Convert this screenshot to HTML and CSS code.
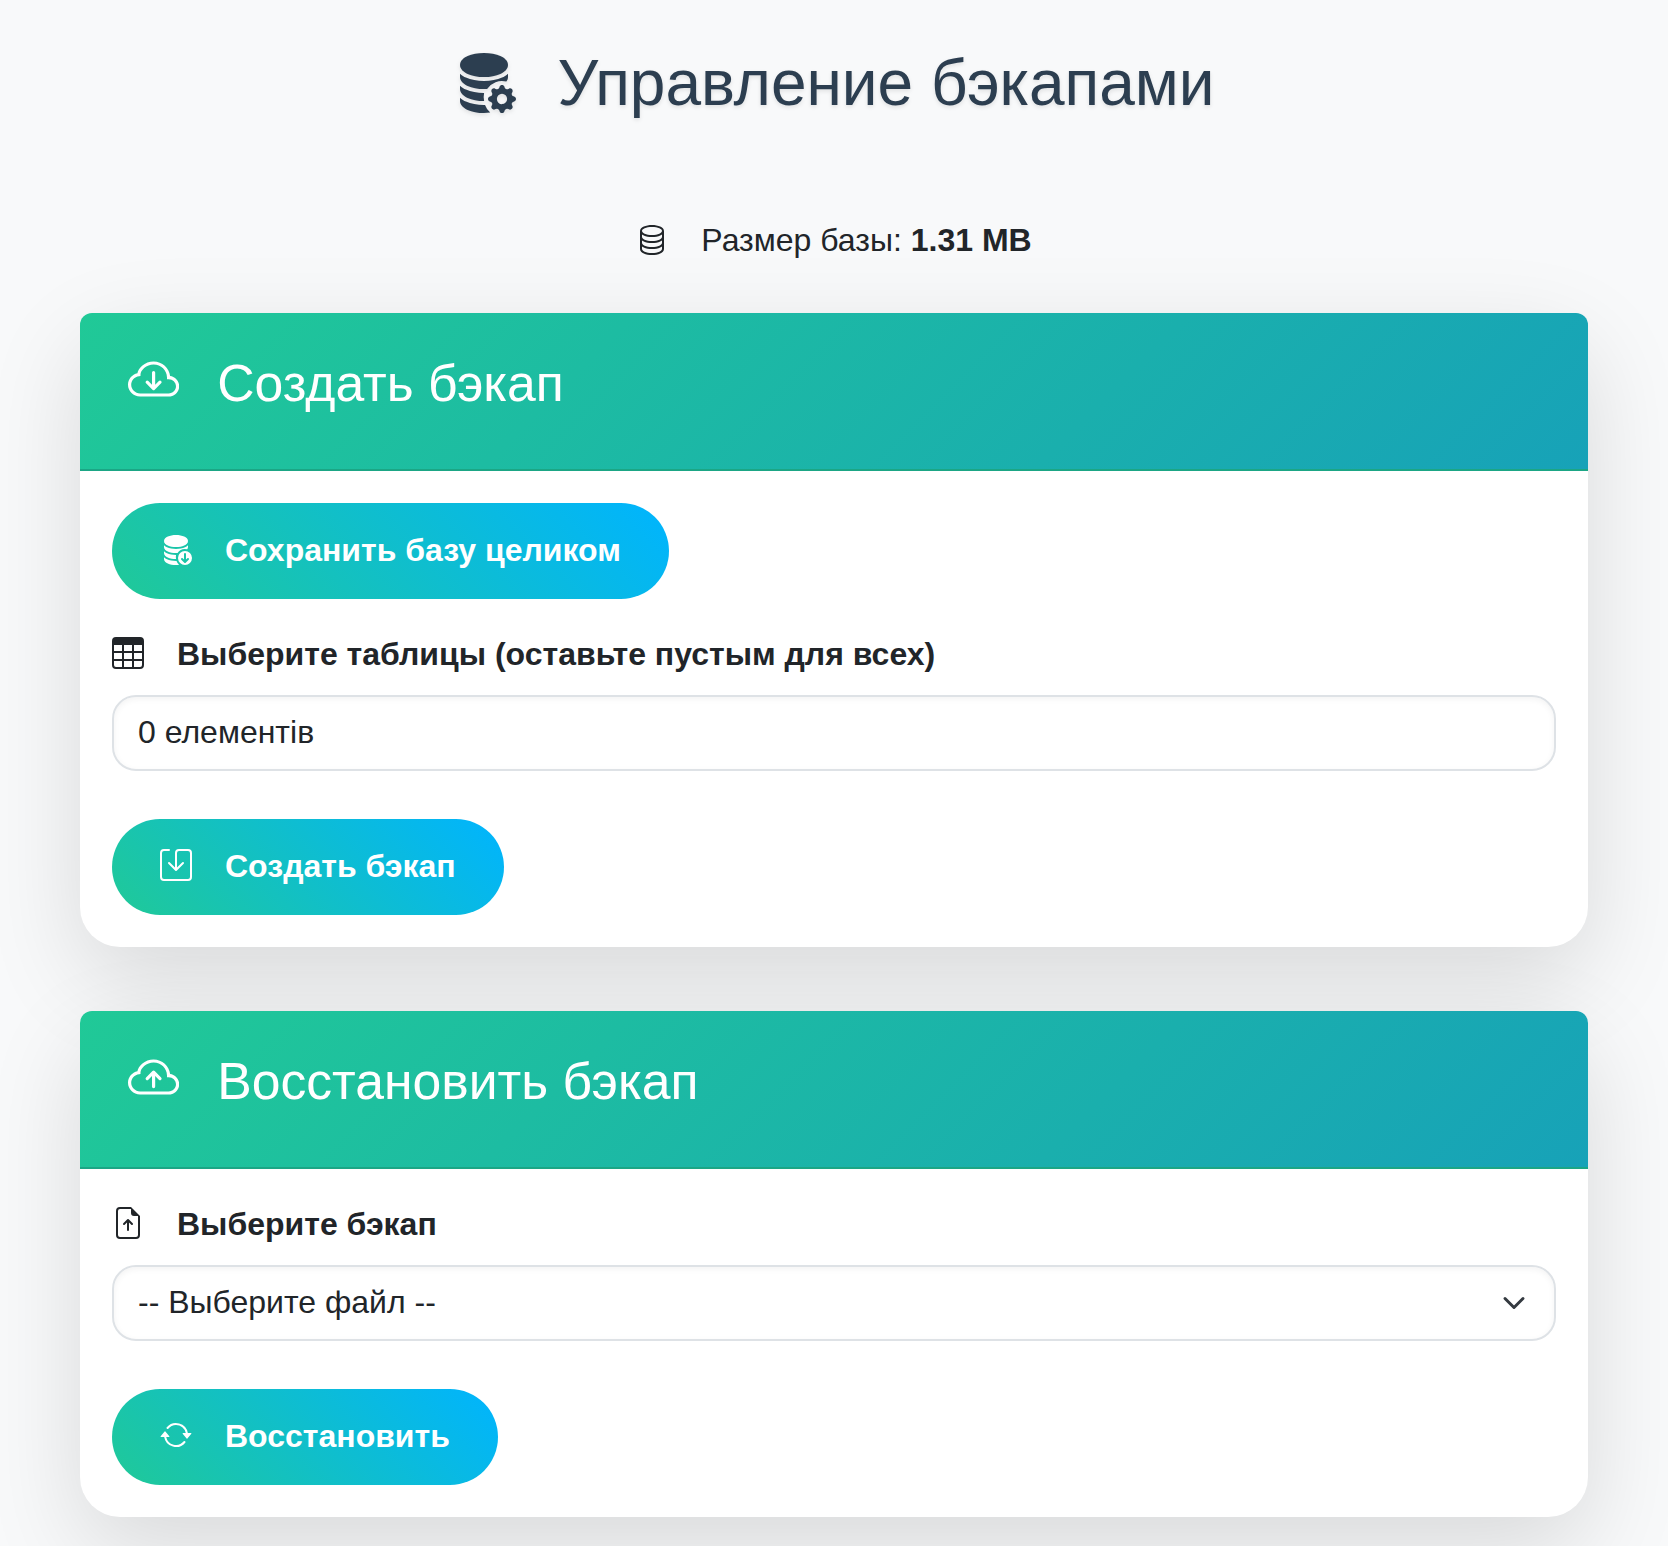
FILE: index.html
```html
<!DOCTYPE html>
<html lang="ru">
<head>
    <meta charset="UTF-8">
    <title>Управление бэкапами</title>
    <link rel="stylesheet" href="styles.css">
</head>

<body>
    <div class="container">
        <!--заголовок-->
        <h1 class="mtit">
            <svg class="ico ico-title" viewBox="0 0 16 16" fill="currentColor">
                <path d="M8 1c-1.573 0-3.022.289-4.096.777C2.875 2.245 2 2.993 2 4s.875 1.755 1.904 2.223C4.978 6.711 6.427 7 8 7s3.022-.289 4.096-.777C13.125 5.755 14 5.007 14 4s-.875-1.755-1.904-2.223C11.022 1.289 9.573 1 8 1Z"/>
                <path d="M2 7v-.839c.457.432 1.004.751 1.49.972C4.722 7.693 6.318 8 8 8s3.278-.307 4.51-.867c.486-.22 1.033-.54 1.49-.972V7c0 .424-.155.802-.411 1.133a4.51 4.51 0 0 0-4.815 1.843A12.31 12.31 0 0 1 8 10c-1.573 0-3.022-.289-4.096-.777C2.875 8.755 2 8.007 2 7Z"/>
                <path d="M8.027 11H8c-1.682 0-3.278-.307-4.51-.867-.486-.22-1.033-.54-1.49-.972V10c0 1.007.875 1.755 1.904 2.223C4.978 12.711 6.427 13 8 13h.027a4.552 4.552 0 0 1 0-2Z"/>
                <path d="M8 14c-1.682 0-3.278-.307-4.51-.867-.486-.22-1.033-.54-1.49-.972V13c0 1.007.875 1.755 1.904 2.223C4.978 15.711 6.427 16 8 16c.536 0 1.058-.034 1.555-.097a4.507 4.507 0 0 1-1.3-1.905L8 14Z"/>
                <path transform="translate(9 9) scale(.4375)" d="M9.405 1.05c-.413-1.4-2.397-1.4-2.81 0l-.1.34a1.464 1.464 0 0 1-2.105.872l-.31-.17c-1.283-.698-2.686.705-1.987 1.987l.169.311c.446.82.023 1.841-.872 2.105l-.34.1c-1.4.413-1.4 2.397 0 2.81l.34.1a1.464 1.464 0 0 1 .872 2.105l-.17.31c-.698 1.283.705 2.686 1.987 1.987l.311-.169a1.464 1.464 0 0 1 2.105.872l.1.34c.413 1.4 2.397 1.4 2.81 0l.1-.34a1.464 1.464 0 0 1 2.105-.872l.31.17c1.283.698 2.686-.705 1.987-1.987l-.169-.311a1.464 1.464 0 0 1 .872-2.105l.34-.1c1.4-.413 1.4-2.397 0-2.81l-.34-.1a1.464 1.464 0 0 1-.872-2.105l.17-.31c.698-1.283-.705-2.686-1.987-1.987l-.311.169a1.464 1.464 0 0 1-2.105-.872l-.1-.34zM8 10.93a2.929 2.929 0 1 1 0-5.86 2.929 2.929 0 0 1 0 5.858z"/>
            </svg>
            <span>Управление бэкапами</span>
        </h1>

        <!--размер базы-->
        <p class="dbsize">
            <svg class="ico" viewBox="0 0 16 16" fill="currentColor">
                <path d="M4.318 2.687C5.234 2.271 6.536 2 8 2s2.766.27 3.682.687C12.644 3.125 13 3.627 13 4c0 .374-.356.875-1.318 1.313C10.766 5.729 9.464 6 8 6s-2.766-.27-3.682-.687C3.356 4.875 3 4.373 3 4c0-.374.356-.875 1.318-1.313ZM13 5.698V7c0 .374-.356.875-1.318 1.313C10.766 8.729 9.464 9 8 9s-2.766-.27-3.682-.687C3.356 7.875 3 7.373 3 7V5.698c.271.202.58.378.904.525C4.978 6.711 6.427 7 8 7s3.022-.289 4.096-.777A4.92 4.92 0 0 0 13 5.698ZM14 4c0-1.007-.875-1.755-1.904-2.223C11.022 1.289 9.573 1 8 1s-3.022.289-4.096.777C2.875 2.245 2 2.993 2 4v9c0 1.007.875 1.755 1.904 2.223C4.978 15.71 6.427 16 8 16s3.022-.289 4.096-.777C13.125 14.755 14 14.007 14 13V4Zm-1 4.698V10c0 .374-.356.875-1.318 1.313C10.766 11.729 9.464 12 8 12s-2.766-.27-3.682-.687C3.356 10.875 3 10.373 3 10V8.698c.271.202.58.378.904.525C4.978 9.71 6.427 10 8 10s3.022-.289 4.096-.777A4.92 4.92 0 0 0 13 8.698Zm0 3V13c0 .374-.356.875-1.318 1.313C10.766 14.729 9.464 15 8 15s-2.766-.27-3.682-.687C3.356 13.875 3 13.373 3 13v-1.302c.271.202.58.378.904.525C4.978 12.71 6.427 13 8 13s3.022-.289 4.096-.777c.324-.147.633-.323.904-.525Z"/>
            </svg>
            <span>Размер базы: <strong>1.31 MB</strong></span>
        </p>

        <!--создать бэкап-->
        <section class="card">
            <header class="card-head">
                <svg class="ico ico-head" viewBox="0 0 16 16" fill="currentColor">
                    <path d="M7.646 10.854a.5.5 0 0 0 .708 0l2-2a.5.5 0 0 0-.708-.708L8.5 9.293V5.5a.5.5 0 0 0-1 0v3.793L6.354 8.146a.5.5 0 1 0-.708.708l2 2z"/>
                    <path d="M4.406 3.342A5.53 5.53 0 0 1 8 2c2.69 0 4.923 2 5.166 4.579C14.758 6.804 16 8.137 16 9.773 16 11.569 14.502 13 12.687 13H3.781C1.708 13 0 11.366 0 9.318c0-1.763 1.266-3.223 2.942-3.593.143-.863.698-1.723 1.464-2.383zm.653.757c-.757.653-1.153 1.44-1.153 2.056v.448l-.445.049C2.064 6.805 1 7.952 1 9.318 1 10.785 2.23 12 3.781 12h8.906C13.98 12 15 10.988 15 9.773c0-1.216-1.02-2.228-2.313-2.228h-.5v-.5C12.188 4.825 10.328 3 8 3a4.53 4.53 0 0 0-2.941 1.1z"/>
                </svg>
                <h2>Создать бэкап</h2>
            </header>
            <div class="card-body">
                <a class="btn btn-first" href="#">
                    <svg class="ico" viewBox="0 0 16 16" fill="currentColor">
                        <path d="M12.5 9a3.5 3.5 0 1 1 0 7 3.5 3.5 0 0 1 0-7Zm.354 5.854 1.5-1.5a.5.5 0 0 0-.708-.708l-.646.647V10.5a.5.5 0 0 0-1 0v2.793l-.646-.647a.5.5 0 0 0-.708.708l1.5 1.5a.5.5 0 0 0 .708 0Z"/>
                        <path d="M8 1c-1.573 0-3.022.289-4.096.777C2.875 2.245 2 2.993 2 4s.875 1.755 1.904 2.223C4.978 6.711 6.427 7 8 7s3.022-.289 4.096-.777C13.125 5.755 14 5.007 14 4s-.875-1.755-1.904-2.223C11.022 1.289 9.573 1 8 1Z"/>
                        <path d="M2 7v-.839c.457.432 1.004.751 1.49.972C4.722 7.693 6.318 8 8 8s3.278-.307 4.51-.867c.486-.22 1.033-.54 1.49-.972V7c0 .424-.155.802-.411 1.133a4.51 4.51 0 0 0-4.815 1.843A12.31 12.31 0 0 1 8 10c-1.573 0-3.022-.289-4.096-.777C2.875 8.755 2 8.007 2 7Z"/>
                        <path d="M8.027 11H8c-1.682 0-3.278-.307-4.51-.867-.486-.22-1.033-.54-1.49-.972V10c0 1.007.875 1.755 1.904 2.223C4.978 12.711 6.427 13 8 13h.027a4.552 4.552 0 0 1 0-2Z"/>
                        <path d="M8 14c-1.682 0-3.278-.307-4.51-.867-.486-.22-1.033-.54-1.49-.972V13c0 1.007.875 1.755 1.904 2.223C4.978 15.711 6.427 16 8 16c.536 0 1.058-.034 1.555-.097a4.507 4.507 0 0 1-1.3-1.905L8 14Z"/>
                    </svg>
                    <span>Сохранить базу целиком</span>
                </a>
                <label class="lbl">
                    <svg class="ico" viewBox="0 0 16 16" fill="currentColor">
                        <path d="M0 2a2 2 0 0 1 2-2h12a2 2 0 0 1 2 2v12a2 2 0 0 1-2 2H2a2 2 0 0 1-2-2V2zm15 2h-4v3h4V4zm0 4h-4v3h4V8zm0 4h-4v3h3a1 1 0 0 0 1-1v-2zm-5 3v-3H6v3h4zm-5 0v-3H1v2a1 1 0 0 0 1 1h3zm-4-4h4V8H1v3zm0-4h4V4H1v3zm5-3v3h4V4H6zm4 4H6v3h4V8z"/>
                    </svg>
                    <span>Выберите таблицы (оставьте пустым для всех)</span>
                </label>
                <div class="field">0 елементів</div>
                <a class="btn" href="#">
                    <svg class="ico" viewBox="0 0 16 16" fill="currentColor">
                        <path d="M2 1a1 1 0 0 0-1 1v12a1 1 0 0 0 1 1h12a1 1 0 0 0 1-1V2a1 1 0 0 0-1-1H9.5a1 1 0 0 0-1 1v7.293l2.646-2.647a.5.5 0 0 1 .708.708l-3.5 3.5a.5.5 0 0 1-.708 0l-3.5-3.5a.5.5 0 1 1 .708-.708L7.5 9.293V2a2 2 0 0 1 2-2H14a2 2 0 0 1 2 2v12a2 2 0 0 1-2 2H2a2 2 0 0 1-2-2V2a2 2 0 0 1 2-2h2.5a.5.5 0 0 1 0 1H2z"/>
                    </svg>
                    <span>Создать бэкап</span>
                </a>
            </div>
        </section>

        <!--восстановить бэкап-->
        <section class="card">
            <header class="card-head">
                <svg class="ico ico-head" viewBox="0 0 16 16" fill="currentColor">
                    <path d="M8.354 5.646a.5.5 0 0 0-.708 0l-2 2a.5.5 0 1 0 .708.708L7.5 7.207V10.5a.5.5 0 0 0 1 0V7.207l1.146 1.147a.5.5 0 0 0 .708-.708l-2-2z"/>
                    <path d="M4.406 3.342A5.53 5.53 0 0 1 8 2c2.69 0 4.923 2 5.166 4.579C14.758 6.804 16 8.137 16 9.773 16 11.569 14.502 13 12.687 13H3.781C1.708 13 0 11.366 0 9.318c0-1.763 1.266-3.223 2.942-3.593.143-.863.698-1.723 1.464-2.383zm.653.757c-.757.653-1.153 1.44-1.153 2.056v.448l-.445.049C2.064 6.805 1 7.952 1 9.318 1 10.785 2.23 12 3.781 12h8.906C13.98 12 15 10.988 15 9.773c0-1.216-1.02-2.228-2.313-2.228h-.5v-.5C12.188 4.825 10.328 3 8 3a4.53 4.53 0 0 0-2.941 1.1z"/>
                </svg>
                <h2>Восстановить бэкап</h2>
            </header>
            <div class="card-body">
                <label class="lbl">
                    <svg class="ico" viewBox="0 0 16 16" fill="currentColor">
                        <path d="M8.5 11.5a.5.5 0 0 1-1 0V7.707L6.354 8.854a.5.5 0 1 1-.708-.708l2-2a.5.5 0 0 1 .708 0l2 2a.5.5 0 0 1-.708.708L8.5 7.707V11.5z"/>
                        <path d="M14 14V4.5L9.5 0H4a2 2 0 0 0-2 2v12a2 2 0 0 0 2 2h8a2 2 0 0 0 2-2zM9.5 3A1.5 1.5 0 0 0 11 4.5h2V14a1 1 0 0 1-1 1H4a1 1 0 0 1-1-1V2a1 1 0 0 1 1-1h5.5v2z"/>
                    </svg>
                    <span>Выберите бэкап</span>
                </label>
                <select class="field field-sel">
                    <option>-- Выберите файл --</option>
                </select>
                <a class="btn" href="#">
                    <svg class="ico" viewBox="0 0 16 16" fill="currentColor">
                        <path d="M11.534 7h3.932a.25.25 0 0 1 .192.41l-1.966 2.36a.25.25 0 0 1-.384 0l-1.966-2.36a.25.25 0 0 1 .192-.41zm-11 2h3.932a.25.25 0 0 0 .192-.41L2.692 6.23a.25.25 0 0 0-.384 0L.342 8.59A.25.25 0 0 0 .534 9z"/>
                        <path d="M8 3c-1.552 0-2.94.707-3.857 1.818a.5.5 0 1 1-.771-.636A6.002 6.002 0 0 1 13.917 7H12.9A5.002 5.002 0 0 0 8 3zM3.1 9a5.002 5.002 0 0 0 8.757 2.182.5.5 0 1 1 .771.636A6.002 6.002 0 0 1 2.083 9H3.1z"/>
                    </svg>
                    <span>Восстановить</span>
                </a>
            </div>
        </section>
    </div>
</body></html>
```

FILE: styles.css
```css
html,
body,
h1,
h2,
p {
    margin: 0;
    padding: 0;
}

body {
    background-color: #f8f9fa;
    color: #212529;
    font-family: "Liberation Sans", Arial, sans-serif;
    font-size: 32px;
    line-height: 48px;
}

.container {
    padding: 45px 80px 29px;
}

.ico {
    display: block;
    flex: none;
    width: 32px;
    height: 32px;
    margin-bottom: 2px;
}

/*제목*/
.mtit {
    display: flex;
    align-items: center;
    justify-content: center;
    gap: 41px;
    margin-bottom: 94px;
    color: #2c3e50;
    font-size: 64px;
    font-weight: 400;
    line-height: 77px;
    text-shadow: 0 2px 4px rgba(0, 0, 0, .1);
}

.ico-title {
    width: 64px;
    height: 64px;
    margin-left: -1px;
    margin-bottom: 6px;
    filter: drop-shadow(0 2px 2px rgba(0, 0, 0, .1));
}

.dbsize {
    display: flex;
    align-items: center;
    justify-content: center;
    gap: 33px;
    margin-bottom: 49px;
}

/*카드*/
.card {
    margin-bottom: 64px;
    background-color: #fff;
    border-radius: 40px;
    box-shadow: 0 32px 96px rgba(0, 0, 0, .13);
}

.card:last-child {
    margin-bottom: 0;
}

.card-head {
    display: flex;
    gap: 38px;
    height: 158px;
    padding: 40px 48px 0;
    box-sizing: border-box;
    color: #fff;
    background: linear-gradient(135deg, #20c997, #17a2b8);
    border-bottom: 2px solid #1ba685;
    border-radius: 12px 12px 0 0;
}

.card-head h2 {
    font-size: 51.7px;
    font-weight: 400;
    line-height: 61px;
}

.ico-head {
    width: 51.2px;
    height: 51.2px;
    margin-top: 2px;
    margin-bottom: 0;
}

.card-body {
    padding: 32px;
}

/*버튼*/
.btn {
    display: flex;
    align-items: center;
    gap: 33px;
    width: fit-content;
    padding: 24px 48px 26px;
    color: #fff;
    font-weight: 700;
    line-height: 46px;
    text-decoration: none;
    background: linear-gradient(45deg, #20c997, #00b4ff);
    border-radius: 48px;
}

.btn-first {
    margin-bottom: 32px;
}

/*입력*/
.lbl {
    display: flex;
    align-items: center;
    gap: 33px;
    margin-bottom: 16px;
    padding-bottom: 2px;
    font-weight: 700;
    line-height: 46px;
}

.field {
    display: block;
    width: 100%;
    height: 76px;
    margin-bottom: 48px;
    padding: 11px 24px 13px;
    box-sizing: border-box;
    color: #212529;
    font: 32px/48px "Liberation Sans", Arial, sans-serif;
    background-color: #fff;
    border: 2px solid #dee2e6;
    border-radius: 24px;
    box-shadow: inset 0 2px 6px rgba(0, 0, 0, .05);
}

.field-sel {
    appearance: none;
    background-image: url("data:image/svg+xml,%3csvg xmlns='http://www.w3.org/2000/svg' viewBox='0 0 16 16'%3e%3cpath fill='none' stroke='%23343a40' stroke-linecap='round' stroke-linejoin='round' stroke-width='2' d='m2 5 6 6 6-6'/%3e%3c/svg%3e");
    background-repeat: no-repeat;
    background-position: right 24px center;
    background-size: 32px 24px;
}
```
